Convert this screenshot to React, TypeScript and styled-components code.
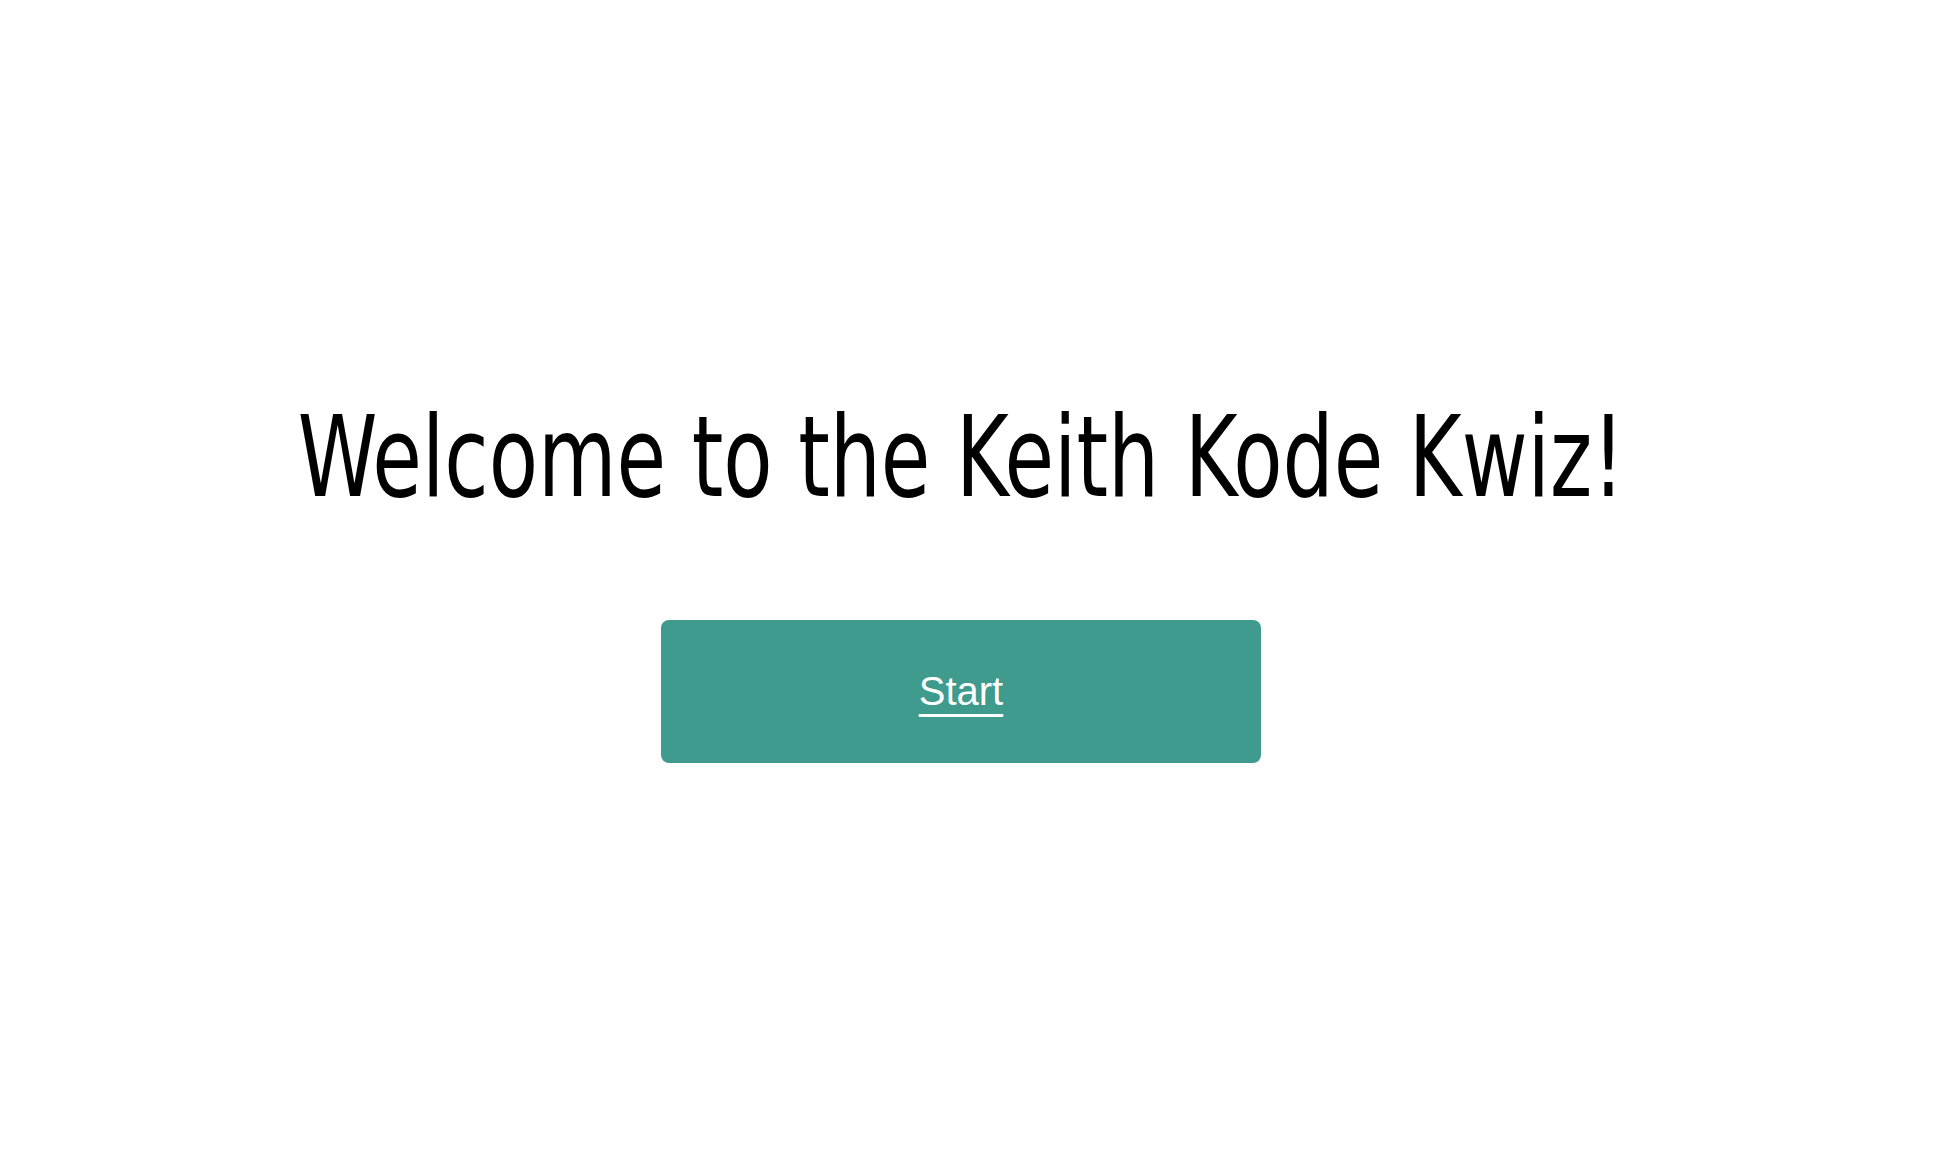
import React from "react";
import styled, { createGlobalStyle } from "styled-components";

const GlobalStyle = createGlobalStyle`
  html, body {
    margin: 0;
    padding: 0;
    background: #ffffff;
  }
  body {
    font-family: "Liberation Sans", Arial, sans-serif;
  }
`;

const Page = styled.main`
  min-height: 100vh;
  box-sizing: border-box;
  display: flex;
  flex-direction: column;
  align-items: center;
  padding: 401px 34px 0 0;
`;

const Title = styled.h1`
  margin: 0;
  font-family: "DejaVu Sans Condensed", "DejaVu Sans", sans-serif;
  font-weight: 400;
  font-size: 112px;
  line-height: 1;
  letter-spacing: 0;
  color: #000000;
  white-space: nowrap;
  transform: scaleX(0.8);
  transform-origin: center;
`;

const StartButton = styled.a`
  margin-top: 107px;
  width: 600px;
  height: 143px;
  border-radius: 8px;
  background: #3e9b8e;
  display: flex;
  align-items: center;
  justify-content: center;
  color: #ffffff;
  font-family: "Liberation Sans", Arial, sans-serif;
  font-size: 40px;
  text-decoration: underline;
  text-decoration-thickness: 3px;
  text-underline-offset: 9px;
  cursor: pointer;
`;

export default function App() {
  return (
    <>
      <GlobalStyle />
      <Page>
        <Title>Welcome to the Keith Kode Kwiz!</Title>
        <StartButton href="#">Start</StartButton>
      </Page>
    </>
  );
}
